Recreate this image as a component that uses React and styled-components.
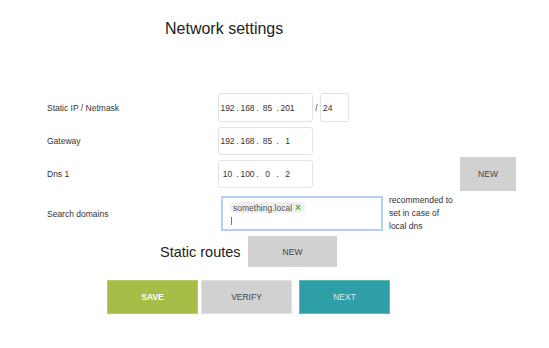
import React from "react";
import styled, { createGlobalStyle } from "styled-components";

const Global = createGlobalStyle`
  html, body { margin: 0; padding: 0; background: #fff; }
  body { font-family: "Liberation Sans", Arial, sans-serif; color: #333; }
`;

const Page = styled.div`
  width: 549px;
  height: 348px;
  overflow: hidden;
  background: #fff;
`;

const Title = styled.h1`
  margin: 20px 0 0 165px;
  font-size: 16px;
  line-height: 18px;
  font-weight: normal;
  color: #222;
`;

const Form = styled.div`
  margin-top: 55px;
  padding-left: 47px;
  display: flex;
  flex-direction: column;
`;

const Row = styled.div`
  display: flex;
  align-items: center;
  height: ${(p) => p.$h}px;
  margin-top: ${(p) => p.$mt || 0}px;
`;

const Label = styled.div`
  width: 171px;
  flex: none;
  font-size: 8.5px;
  color: #333;
`;

const IpBox = styled.div`
  box-sizing: border-box;
  width: 95px;
  height: 100%;
  border: 1px solid #e2e2e2;
  border-radius: 3px;
  display: flex;
  align-items: center;
  padding-left: 1px;
  font-size: 8.5px;
  color: #333;
`;

const Octet = styled.span`
  width: 15px;
  text-align: center;
`;

const Dot = styled.span`
  width: 5px;
  text-align: center;
`;

const Slash = styled.span`
  width: 7px;
  text-align: center;
  font-size: 8.5px;
  color: #444;
`;

const MaskBox = styled.div`
  box-sizing: border-box;
  width: 29px;
  height: 100%;
  border: 1px solid #e2e2e2;
  border-radius: 3px;
  display: flex;
  align-items: center;
  padding-left: 2px;
  font-size: 8.5px;
  color: #333;
`;

const GrayButton = styled.button`
  box-sizing: border-box;
  flex: none;
  width: ${(p) => p.$w}px;
  height: ${(p) => p.$h}px;
  margin-left: ${(p) => p.$ml || 0}px;
  border: none;
  background: #d1d1d1;
  color: #444;
  font-family: "Liberation Sans", Arial, sans-serif;
  font-size: 8.5px;
  padding: 0;
`;

const TagBox = styled.div`
  box-sizing: border-box;
  width: 162px;
  height: 35px;
  margin-left: 3px;
  border: 2px solid #b3cff5;
  padding: 4px 0 0 7px;
  display: flex;
  flex-direction: column;
  align-items: flex-start;
`;

const Chip = styled.span`
  display: inline-flex;
  align-items: center;
  height: 11px;
  padding: 0 4px 0 3px;
  border-radius: 6px;
  background: #eeeeee;
  font-size: 8.5px;
  color: #555;
  gap: 3px;
`;

const ChipX = styled.span`
  color: #46b04a;
  font-size: 10px;
  font-weight: bold;
  line-height: 1;
`;

const Caret = styled.span`
  width: 1px;
  height: 8px;
  margin-top: 4px;
  margin-left: 1px;
  background: #777;
`;

const Help = styled.div`
  margin-left: 6px;
  width: 66px;
  font-size: 8.5px;
  line-height: 13px;
  color: #333;
`;

const RoutesRow = styled.div`
  display: flex;
  align-items: center;
  margin-top: 5px;
  padding-left: 160px;
  height: 31px;
`;

const RoutesTitle = styled.span`
  font-size: 14.5px;
  color: #222;
  width: 88px;
`;

const Actions = styled.div`
  display: flex;
  margin-top: 13px;
  padding-left: 107px;
`;

const ActionButton = styled.button`
  box-sizing: border-box;
  width: 91px;
  height: 34px;
  margin-left: ${(p) => p.$ml || 0}px;
  border: 1px solid ${(p) => p.$border};
  background: ${(p) => p.$bg};
  color: ${(p) => p.$fg};
  font-family: "Liberation Sans", Arial, sans-serif;
  font-size: 8.5px;
  font-weight: ${(p) => (p.$bold ? "bold" : "normal")};
  padding: 0;
`;

const Ip = ({ parts }) => (
  <IpBox>
    {parts.map((p, i) => (
      <React.Fragment key={i}>
        {i > 0 && <Dot>.</Dot>}
        <Octet>{p}</Octet>
      </React.Fragment>
    ))}
  </IpBox>
);

export default function App() {
  return (
    <Page>
      <Global />
      <Title>Network settings</Title>
      <Form>
        <Row $h={29}>
          <Label>Static IP / Netmask</Label>
          <Ip parts={["192", "168", "85", "201"]} />
          <Slash>/</Slash>
          <MaskBox>24</MaskBox>
        </Row>
        <Row $h={28} $mt={5}>
          <Label>Gateway</Label>
          <Ip parts={["192", "168", "85", "1"]} />
        </Row>
        <Row $h={28} $mt={5}>
          <Label>Dns 1</Label>
          <Ip parts={["10", "100", "0", "2"]} />
          <GrayButton $w={56} $h={34} $ml={147}>NEW</GrayButton>
        </Row>
        <Row $h={35} $mt={8}>
          <Label>Search domains</Label>
          <TagBox>
            <Chip>
              something.local<ChipX>×</ChipX>
            </Chip>
            <Caret />
          </TagBox>
          <Help>recommended to set in case of local dns</Help>
        </Row>
      </Form>
      <RoutesRow>
        <RoutesTitle>Static routes</RoutesTitle>
        <GrayButton $w={89} $h={31}>NEW</GrayButton>
      </RoutesRow>
      <Actions>
        <ActionButton $bg="#a4be47" $border="#b5cc66" $fg="#fff" $bold>SAVE</ActionButton>
        <ActionButton $bg="#d1d1d1" $border="#e2e2e2" $fg="#444" $ml={3}>VERIFY</ActionButton>
        <ActionButton $bg="#2f9fa7" $border="#5fb8be" $fg="#d6eeef" $ml={7}>NEXT</ActionButton>
      </Actions>
    </Page>
  );
}
